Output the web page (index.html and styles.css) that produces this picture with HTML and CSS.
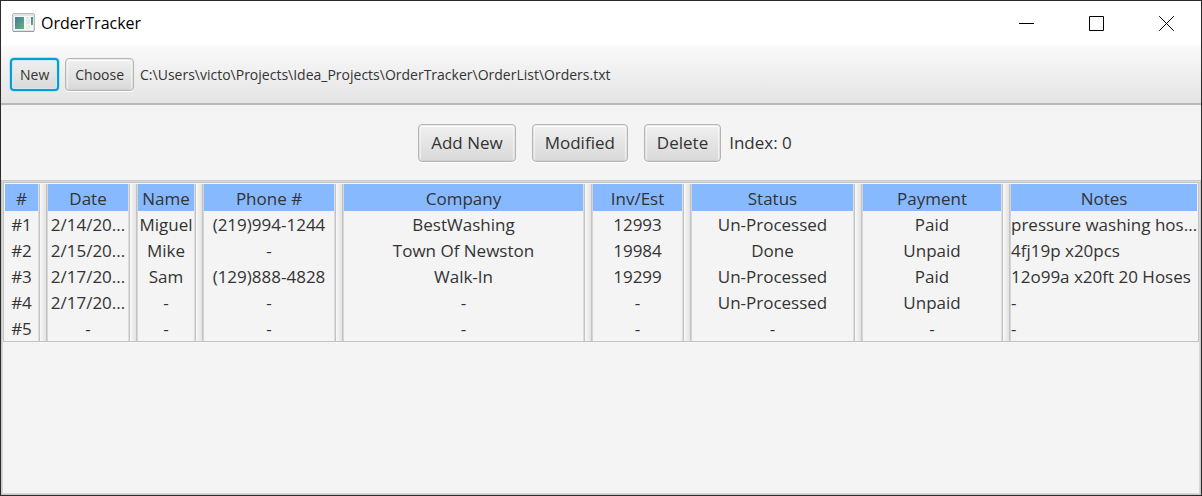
FILE: index.html
```html
<!DOCTYPE html>
<html lang="en">
<head>
<meta charset="utf-8">
<title>OrderTracker</title>
<link rel="stylesheet" href="styles.css">
</head>
<body>
<div class="window">
  <header class="titlebar">
    <svg class="app-icon" width="24" height="20" viewBox="0 0 24 20" aria-hidden="true">
      <defs>
        <linearGradient id="pane" x1="0" y1="0" x2="1" y2="1">
          <stop offset="0" stop-color="#4478a0"/>
          <stop offset="1" stop-color="#62b574"/>
        </linearGradient>
      </defs>
      <rect x="0.5" y="0.5" width="22" height="18" rx="1.5" fill="#e1e4e6" stroke="#b4b9bd"/>
      <path d="M1 18.5H22" stroke="#989da1"/>
      <rect x="2" y="3" width="19" height="14" fill="#f7f7f7"/>
      <rect x="3" y="4" width="9" height="12" fill="url(#pane)"/>
      <rect x="14" y="4" width="4" height="7" fill="#e8e8e8"/>
      <rect x="14" y="12" width="4" height="4" fill="#ececec"/>
      <rect x="19" y="4" width="2" height="8" fill="url(#pane)"/>
    </svg>
    <h1 class="title">OrderTracker</h1>
    <div class="window-controls">
      <button class="control" type="button" aria-label="Minimize"><svg width="15" height="15" viewBox="0 0 15 15"><path d="M0 7.5H15" stroke="#000"/></svg></button>
      <button class="control" type="button" aria-label="Maximize"><svg width="15" height="15" viewBox="0 0 15 15"><path d="M.5 .5H14.5V14.5H.5Z" fill="none" stroke="#000"/></svg></button>
      <button class="control" type="button" aria-label="Close"><svg width="15" height="15" viewBox="0 0 15 15"><path d="M.2 .2L14.8 14.8M14.8 .2L.2 14.8" stroke="#000"/></svg></button>
    </div>
  </header>
  <div class="toolbar">
    <button class="button small focused" type="button">New</button>
    <button class="button small" type="button">Choose</button>
    <span class="path">C:\Users\victo\Projects\Idea_Projects\OrderTracker\OrderList\Orders.txt</span>
  </div>
  <div class="actions">
    <button class="button" type="button">Add New</button>
    <button class="button" type="button">Modified</button>
    <button class="button" type="button">Delete</button>
    <span class="index">Index: 0</span>
  </div>
  <main class="content">
    <div class="split">
      <table class="orders">
        <colgroup>
          <col class="c-num"><col class="c-date"><col class="c-name"><col class="c-phone"><col class="c-company"><col class="c-inv"><col class="c-status"><col class="c-payment"><col>
        </colgroup>
        <thead>
          <tr><th>#</th><th>Date</th><th>Name</th><th>Phone #</th><th>Company</th><th>Inv/Est</th><th>Status</th><th>Payment</th><th>Notes</th></tr>
        </thead>
        <tbody>
          <tr><td>#1</td><td>2/14/20...</td><td>Miguel</td><td>(219)994-1244</td><td>BestWashing</td><td>12993</td><td>Un-Processed</td><td>Paid</td><td>pressure washing hos...</td></tr>
          <tr><td>#2</td><td>2/15/20...</td><td>Mike</td><td>-</td><td>Town Of Newston</td><td>19984</td><td>Done</td><td>Unpaid</td><td>4fj19p x20pcs</td></tr>
          <tr><td>#3</td><td>2/17/20...</td><td>Sam</td><td>(129)888-4828</td><td>Walk-In</td><td>19299</td><td>Un-Processed</td><td>Paid</td><td>12o99a x20ft 20 Hoses</td></tr>
          <tr><td>#4</td><td>2/17/20...</td><td>-</td><td>-</td><td>-</td><td>-</td><td>Un-Processed</td><td>Unpaid</td><td>-</td></tr>
          <tr><td>#5</td><td>-</td><td>-</td><td>-</td><td>-</td><td>-</td><td>-</td><td>-</td><td>-</td></tr>
        </tbody>
      </table>
    </div>
  </main>
</div>
</body>
</html>
```
FILE: styles.css
```css
* { box-sizing: border-box; }

body {
  margin: 0;
  font-family: "Open Sans", "Noto Sans", sans-serif;
  font-size: 17px;
  color: #333;
}

.window {
  display: flex;
  flex-direction: column;
  min-height: 100vh;
  border: 1px solid #2b2b2b;
  background: #f4f4f4;
}

.titlebar {
  display: flex;
  align-items: center;
  height: 44px;
  padding-left: 11px;
  gap: 5px;
  background: #fff;
}

.title {
  margin: 0;
  font-size: 16px;
  font-weight: 400;
  color: #000;
}

.window-controls {
  display: flex;
  height: 100%;
  margin-left: auto;
}

.control {
  display: flex;
  align-items: center;
  justify-content: center;
  width: 70px;
  padding: 0;
  border: 0;
  background: none;
}

.toolbar {
  display: flex;
  align-items: center;
  height: 60px;
  padding: 0 9px;
  gap: 6px;
  border-bottom: 2px solid #b9b9b9;
  background: linear-gradient(#fafafa, #e4e4e4);
}

.path { font-size: 14px; }

.button {
  height: 38px;
  padding: 0 12px;
  border: 1px solid #b5b5b5;
  border-radius: 4px;
  background: linear-gradient(#f0f0f0, #d9d9d9);
  box-shadow: inset 0 0 0 1px #b5b5b544, inset 0 2px 0 #fff, inset 2px 0 0 #ffffff88, inset -2px 0 0 #ffffff88, 0 1px 0 #fff;
  color: #333;
  font: inherit;
  white-space: nowrap;
}

.button.small {
  height: 33px;
  padding: 0 9px;
  font-size: 14px;
}

.button.small.focused {
  padding: 0 8px;
  border: 2px solid #039ed3;
  box-shadow: 0 0 0 1px #b8e0f0, inset 0 0 0 1px #d4e8f0;
}

.actions {
  display: flex;
  align-items: center;
  justify-content: center;
  height: 75px;
  padding-left: 8px;
  gap: 16px;
}

.index { margin-left: -8px; }

.content {
  flex: 1;
  border: 1px solid #c8c8c8;
  outline: 1px solid #d9d9d9;
  outline-offset: -2px;
  padding: 1px;
}

.split {
  border: 1px solid #c4c4c4;
  padding: 1px 1px 0;
}

.orders {
  width: 100%;
  table-layout: fixed;
  border-collapse: collapse;
}

.c-num { width: 43px; }
.c-date { width: 90px; }
.c-name { width: 66px; }
.c-phone { width: 140px; }
.c-company { width: 249px; }
.c-inv { width: 99px; }
.c-status { width: 171px; }
.c-payment { width: 148px; }

th, td {
  padding: 2px 10px 0 0;
  font-weight: 400;
  line-height: 24px;
  text-align: center;
  white-space: nowrap;
  background: linear-gradient(90deg, #dcdcdc 1px, #c4c4c4 1px 2px, #f8f8f8 2px, #e2e2e2 8px, #c4c4c4 8px 9px, #d4d4d4 9px) right / 10px 100% no-repeat;
}

th {
  line-height: 25px;
  background-color: #87b9ff;
}

th:last-child, td:last-child {
  padding-right: 0;
  background-image: none;
}

td:last-child { text-align: left; }
```
